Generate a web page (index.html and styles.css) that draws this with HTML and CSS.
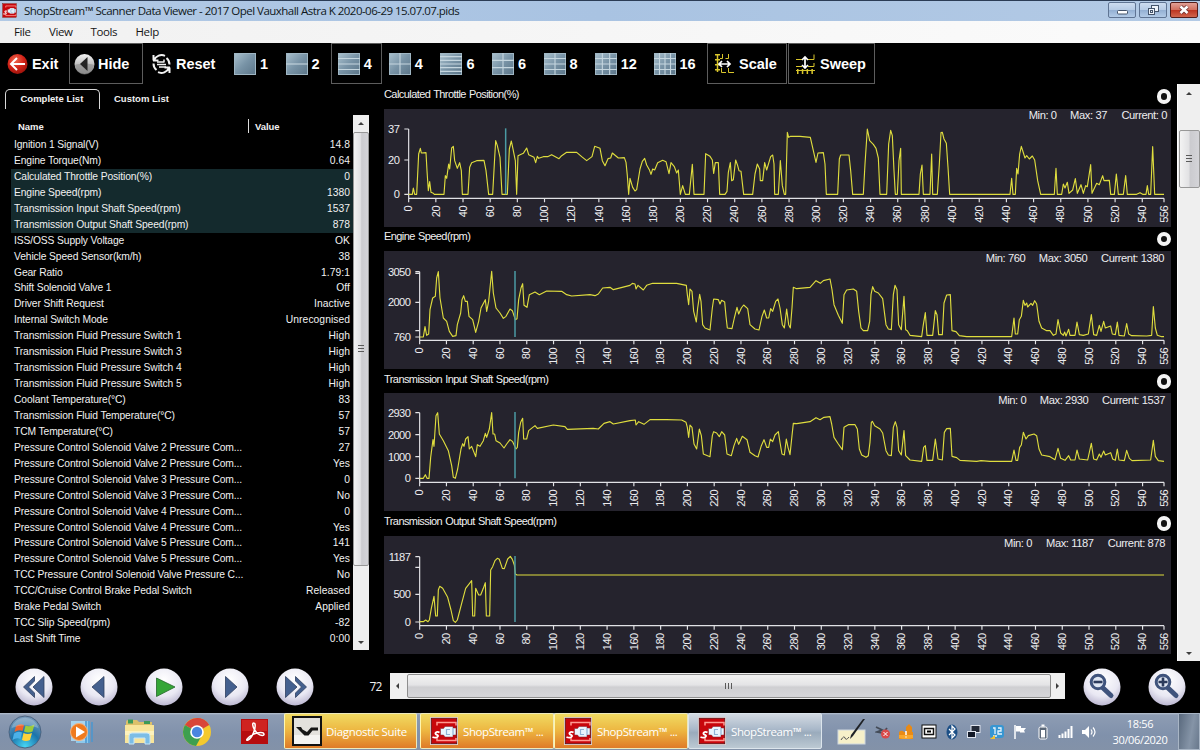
FILE: index.html
```html
<!DOCTYPE html>
<html lang="en">
<head>
<meta charset="utf-8">
<title>ShopStream Scanner Data Viewer</title>
<link rel="stylesheet" href="styles.css">
</head>
<body>
<svg class="defs" width="0" height="0">
  <defs>
    <linearGradient id="tile" x1="0" y1="0" x2="1" y2="1"><stop offset="0" stop-color="#a9c0cd"/><stop offset=".5" stop-color="#7893a6"/><stop offset="1" stop-color="#5c7689"/></linearGradient>
    <radialGradient id="orb" cx=".5" cy=".3" r=".75"><stop offset="0" stop-color="#ffffff"/><stop offset=".6" stop-color="#e9e8f3"/><stop offset="1" stop-color="#b3aecb"/></radialGradient>
    <radialGradient id="red" cx=".4" cy=".3" r=".8"><stop offset="0" stop-color="#ef6a50"/><stop offset=".5" stop-color="#d32318"/><stop offset="1" stop-color="#8f0f08"/></radialGradient>
    <linearGradient id="silver" x1="0" y1="0" x2="0" y2="1"><stop offset="0" stop-color="#f4f4f4"/><stop offset="1" stop-color="#8d8d8d"/></linearGradient>
    <radialGradient id="start" cx=".5" cy=".95" r=".95"><stop offset="0" stop-color="#46d6f4"/><stop offset=".5" stop-color="#1b74ab"/><stop offset="1" stop-color="#7e9cba"/></radialGradient>
    <symbol id="shop" viewBox="0 0 28 28">
      <rect width="28" height="28" fill="#ddd3d3"/><rect x="1.300" y="1.300" width="25.400" height="25.400" fill="#c8060c" stroke="#5e1014" stroke-width=".8"/>
      <path d="M7 8.500V5.500h19v3M7 21v2.500h19V21" fill="none" stroke="#ff9a92" stroke-width="1.500"/>
      <path d="M10.500 11.500h3l1.500-2h8V11h3v7h-3v2h-8l-1.500-2h-3z" fill="#e9f5fd" stroke="#7d2430" stroke-width=".5"/>
      <path d="M9.500 15.500c-2-1.200-4.500-.4-4 1.200s3 1 2.500 2.600-3.500 1.600-5.500.7" fill="none" stroke="#fff" stroke-width="1.900"/>
      <path d="M20 12.500h-3.500v5H20M23 11v7" fill="none" stroke="#8fb3d6" stroke-width="1.200"/>
    </symbol>
  </defs>
</svg>
<div class="screen">
  <header class="titlebar">
    <svg class="app-icon" width="15" height="15"><use href="#shop"/></svg>
    <span class="title">ShopStream™ Scanner Data Viewer - 2017 Opel Vauxhall Astra K 2020-06-29 15.07.07.pids</span>
    <span class="winbtn"><svg width="28" height="16"><rect x="9.500" y="8.500" width="10" height="3.500" rx="1" fill="#fff" stroke="#44546b"/></svg></span>
    <span class="winbtn"><svg width="28" height="16" fill="#eef3fa" stroke="#44546b"><rect x="12.500" y="3.500" width="7" height="6"/><rect x="9.500" y="6.500" width="6" height="6"/><rect x="11.500" y="8.500" width="2" height="2"/></svg></span>
    <span class="winbtn close"><svg width="28" height="16"><path d="M10.500 4.500l7 6.500M17.500 4.500l-7 6.500" stroke="#6e3030" stroke-width="4.200"/><path d="M10.500 4.500l7 6.500M17.500 4.500l-7 6.500" stroke="#fff" stroke-width="2.600"/></svg></span>
  </header>
  <nav class="menu"><span class="m-file">File</span><span class="m-view">View</span><span class="m-tools">Tools</span><span>Help</span></nav>

  <div class="toolbar">
    <div class="tool exit"><svg width="21" height="22"><circle cx="10.500" cy="11" r="10" fill="url(#red)"/><path d="M18 11H4M10 5l-6 6 6 6" fill="none" stroke="#fff" stroke-width="2"/></svg>Exit</div>
    <div class="tool hide boxed"><svg width="21" height="22"><circle cx="10.500" cy="11" r="10" fill="url(#silver)"/><path d="M1 12a9.500 9.500 0 0 0 19 0c-5-2-14-2-19 0z" fill="#8b8b8b" opacity=".6"/><path d="M13.500 4v14L6 11z" fill="#232323"/></svg>Hide</div>
    <div class="tool reset"><svg width="21" height="22" fill="none" stroke="#f2f2f2" stroke-width="2"><path d="M2.500 7.500V2M2 7.500h5.500M3 7A8.500 8.500 0 0 1 14 2.800M18.500 14.500V20M19 14.500h-5.500M18 15A8.500 8.500 0 0 1 7 19.200M2.500 10.500q0 4 3 6.500M18.500 11.500q0-4-3-6.500"/><path d="M6 9h7M6 11.500h9M8 14h7M13 6.500v3" stroke-width="1.500"/></svg>Reset</div>
    <div class="tool lay" data-c="1" data-r="1">1</div>
    <div class="tool lay" data-c="1" data-r="2">2</div>
    <div class="tool lay boxed" data-c="1" data-r="4">4</div>
    <div class="tool lay" data-c="2" data-r="2">4</div>
    <div class="tool lay" data-c="1" data-r="6">6</div>
    <div class="tool lay" data-c="2" data-r="3">6</div>
    <div class="tool lay" data-c="2" data-r="4">8</div>
    <div class="tool lay wide" data-c="3" data-r="4">12</div>
    <div class="tool lay wide" data-c="4" data-r="4">16</div>
    <div class="tool scale boxed"><svg width="21" height="22" fill="none"><path d="M3.500 1v18" stroke="#d9c62c" stroke-width="5" stroke-dasharray="1.500 3.500"/><path d="M3.500 1v18" stroke="#d9c62c" stroke-width="1.500"/><path d="M8.500 1v4.500H6M14.500 1v4.500h-3M7.500 15v4.500H12M14.500 15v4.500H20" stroke="#d9c62c"/><path d="M5 11h11M8 8l-3 3 3 3M13 8l3 3-3 3" stroke="#fff" stroke-width="1.700"/></svg>Scale</div>
    <div class="tool sweep boxed"><svg width="21" height="22" fill="none"><path d="M2 18.500h18" stroke="#d9c62c" stroke-width="5" stroke-dasharray="1.500 3.300"/><path d="M1 17.500h19" stroke="#d9c62c"/><path d="M1 6.500h6M1 13.500h6M13 6.500h6V1.500M13 13.500h6V10" stroke="#d9c62c"/><path d="M10 4v11M7 7l3-3 3 3M7 12l3 3 3-3" stroke="#fff" stroke-width="1.700"/></svg>Sweep</div>
  </div>

  <main class="work">
    <aside class="side">
      <div class="tabs"><span class="tab active">Complete List</span><span class="tab">Custom List</span></div>
      <div class="listwrap">
        <div class="list">
          <div class="head"><span class="h-name">Name</span><span class="h-val">Value</span></div>
          <div class="row"><span>Ignition 1 Signal(V)</span><b>14.8</b></div>
          <div class="row"><span>Engine Torque(Nm)</span><b>0.64</b></div>
          <div class="row sel"><span>Calculated Throttle Position(%)</span><b>0</b></div>
          <div class="row sel"><span>Engine Speed(rpm)</span><b>1380</b></div>
          <div class="row sel"><span>Transmission Input Shaft Speed(rpm)</span><b>1537</b></div>
          <div class="row sel"><span>Transmission Output Shaft Speed(rpm)</span><b>878</b></div>
          <div class="row"><span>ISS/OSS Supply Voltage</span><b>OK</b></div>
          <div class="row"><span>Vehicle Speed Sensor(km/h)</span><b>38</b></div>
          <div class="row"><span>Gear Ratio</span><b>1.79:1</b></div>
          <div class="row"><span>Shift Solenoid Valve 1</span><b>Off</b></div>
          <div class="row"><span>Driver Shift Request</span><b>Inactive</b></div>
          <div class="row"><span>Internal Switch Mode</span><b>Unrecognised</b></div>
          <div class="row"><span>Transmission Fluid Pressure Switch 1</span><b>High</b></div>
          <div class="row"><span>Transmission Fluid Pressure Switch 3</span><b>High</b></div>
          <div class="row"><span>Transmission Fluid Pressure Switch 4</span><b>High</b></div>
          <div class="row"><span>Transmission Fluid Pressure Switch 5</span><b>High</b></div>
          <div class="row"><span>Coolant Temperature(°C)</span><b>83</b></div>
          <div class="row"><span>Transmission Fluid Temperature(°C)</span><b>57</b></div>
          <div class="row"><span>TCM Temperature(°C)</span><b>57</b></div>
          <div class="row"><span>Pressure Control Solenoid Valve 2 Pressure Com...</span><b>27</b></div>
          <div class="row"><span>Pressure Control Solenoid Valve 2 Pressure Com...</span><b>Yes</b></div>
          <div class="row"><span>Pressure Control Solenoid Valve 3 Pressure Com...</span><b>0</b></div>
          <div class="row"><span>Pressure Control Solenoid Valve 3 Pressure Com...</span><b>No</b></div>
          <div class="row"><span>Pressure Control Solenoid Valve 4 Pressure Com...</span><b>0</b></div>
          <div class="row"><span>Pressure Control Solenoid Valve 4 Pressure Com...</span><b>Yes</b></div>
          <div class="row"><span>Pressure Control Solenoid Valve 5 Pressure Com...</span><b>141</b></div>
          <div class="row"><span>Pressure Control Solenoid Valve 5 Pressure Com...</span><b>Yes</b></div>
          <div class="row"><span>TCC Pressure Control Solenoid Valve Pressure C...</span><b>No</b></div>
          <div class="row"><span>TCC/Cruise Control Brake Pedal Switch</span><b>Released</b></div>
          <div class="row"><span>Brake Pedal Switch</span><b>Applied</b></div>
          <div class="row"><span>TCC Slip Speed(rpm)</span><b>-82</b></div>
          <div class="row"><span>Last Shift Time</span><b>0:00</b></div>
        </div>
        <div class="vscroll listscroll"><i class="up"></i><div class="thumb"><i class="grip"></i></div><i class="down"></i></div>
      </div>
    </aside>
    <section class="graphs" id="graphs"></section>
    <div class="vscroll mainscroll"><i class="up"></i><div class="thumb"><i class="grip"></i></div><i class="down"></i></div>
  </main>

  <footer class="controls">
    <div class="players">
      <svg width="40" height="40"><circle cx="20" cy="20" r="18.500" fill="url(#orb)"/><path d="M20.500 9.500l-11 10.500 11 10.500v-4.500L14.500 20l6-6zM30 9.500v21L19 20z" fill="#44608f" stroke="#2e3f60" stroke-width=".8"/></svg>
      <svg width="40" height="40"><circle cx="20" cy="20" r="18.500" fill="url(#orb)"/><path d="M25 9.500v21L13 20z" fill="#44608f" stroke="#2e3f60" stroke-width=".8"/></svg>
      <svg width="40" height="40"><circle cx="20" cy="20" r="18.500" fill="url(#orb)"/><path d="M12.500 11v18.500L31 20z" fill="#35a637" stroke="#23662a" stroke-width=".8"/></svg>
      <svg width="40" height="40"><circle cx="20" cy="20" r="18.500" fill="url(#orb)"/><path d="M15.500 9.500v21L27 20z" fill="#44608f" stroke="#2e3f60" stroke-width=".8"/></svg>
      <svg width="40" height="40"><circle cx="20" cy="20" r="18.500" fill="url(#orb)"/><path d="M10.500 9.500v21L22 20zM20.500 9.500L31.500 20l-11 10.500v-4.500l6-6-6-6z" fill="#44608f" stroke="#2e3f60" stroke-width=".8"/></svg>
    </div>
    <span class="frame">72</span>
    <div class="hscroll"><i class="left"></i><div class="hthumb"><i class="grip v"></i></div><i class="right"></i></div>
    <div class="zooms">
      <svg width="40" height="40"><circle cx="20" cy="20" r="18.500" fill="url(#orb)"/><path d="M20.500 20.500l8.500 8" stroke="#3f537c" stroke-width="5" stroke-linecap="round"/><circle cx="16" cy="15" r="6.800" fill="#dfe6f2" stroke="#3f537c" stroke-width="3"/><path d="M11.500 15h9" stroke="#2c3b5c" stroke-width="2.600"/></svg>
      <svg width="40" height="40"><circle cx="20" cy="20" r="18.500" fill="url(#orb)"/><path d="M20.500 20.500l8.500 8" stroke="#3f537c" stroke-width="5" stroke-linecap="round"/><circle cx="16" cy="15" r="6.800" fill="#dfe6f2" stroke="#3f537c" stroke-width="3"/><path d="M11.500 15h9M16 10.500v9" stroke="#2c3b5c" stroke-width="2.600"/></svg>
    </div>
  </footer>

  <div class="taskbar">
    <div class="pins">
      <svg class="p1" width="34" height="34"><circle cx="17" cy="17" r="16" fill="url(#start)" stroke="#4d6480"/><path d="M8 11q4-3 8-1l-1.500 6q-4-2-8 1z" fill="#f0642d"/><path d="M17.500 10.500q4 2 9-1l-2 7q-4 2-8.500 0z" fill="#9bcb3c"/><path d="M6 18.500q4-3 8-1L12.500 24q-4-2-8 1z" fill="#4bb1e8"/><path d="M15.500 18q4 2 8.500 0l-2 7q-4 2-8 0z" fill="#fdd23a"/><path d="M3.500 13A14 14 0 0 1 30.500 13 30 24 0 0 0 3.500 13z" fill="#fff" opacity=".25"/></svg>
      <svg class="p2" width="24" height="24"><path d="M6 1h14v22H6z" fill="#8cc9ec"/><path d="M16 1v22M19 1v22M22 2v20" stroke="#4a97cf" stroke-width="1.500"/><path d="M1 1h14v20H1z" fill="#a8d4ee"/><circle cx="9" cy="12" r="8.500" fill="#ef7a1e" stroke="#f7b27b"/><path d="M6 6.500v11l9-5.500z" fill="#fff"/></svg>
      <svg class="p3" width="31" height="28"><path d="M2 4q0-2 2-2h9l2 2h13v20H2z" fill="#dcc06a"/><path d="M4 1.500h5v4H4zM20 3h6v3h-6z" fill="#3c9b58"/><path d="M1 7h29v18H1z" fill="#f8e59b"/><path d="M1 13h29v4H1z" fill="#fdf2bd"/><path d="M5 26v-8q0-3 3-3h15q3 0 3 3v8h-5v-6H10v6z" fill="#7cbde6" stroke="#c7e6f7"/></svg>
      <svg class="p4" width="30" height="30"><circle cx="15" cy="15" r="14" fill="#f4c92e"/><path d="M15 15L2.900 8A14 14 0 0 1 27.100 8z" fill="#d9453a"/><path d="M15 1a14 14 0 0 1 12.100 7H15z" fill="#d9453a"/><path d="M2.900 8A14 14 0 0 0 14 29l6-11-5-3z" fill="#3d9f50"/><circle cx="15" cy="15" r="6.800" fill="#fff"/><circle cx="15" cy="15" r="5.200" fill="#4a85e0"/></svg>
      <svg class="p5" width="28" height="26"><rect width="27" height="25" fill="#b60c0f"/><rect x="1" y="1" width="25" height="11" fill="#cf2321"/><path d="M12.500 4c-2 0 0 7 4 10.500 3 2.500 7 2.500 6.500.500-.5-2.500-9-1.500-13 1.500-5 3.500-5 5.500-3 4.500 4-2 8-11 7-16-.2-.8-1-1-1.500-1z" fill="none" stroke="#fff" stroke-width="1.500"/></svg>
    </div>
    <div class="task hot diag"><svg width="30" height="30"><rect x="1" y="1" width="28" height="28" fill="#e3e1dd" stroke="#111" stroke-width="2"/><path d="M2 19h26v9H2z" fill="#fff" opacity=".6"/><path d="M4 11h5l1.500 2.500L15 16l4-4.500h7v3h-5.500l-4 5h-4L7 14z" fill="#161616"/></svg><span>Diagnostic Suite</span></div>
    <div class="task hot"><svg width="28" height="28"><use href="#shop"/></svg><span>ShopStream™ ...</span></div>
    <div class="task hot"><svg width="28" height="28"><use href="#shop"/></svg><span>ShopStream™ ...</span></div>
    <div class="task cool"><svg width="28" height="28"><use href="#shop"/></svg><span>ShopStream™ ...</span></div>
    <div class="tray">
      <svg class="pen" width="30" height="30"><rect x="1" y="13" width="27" height="14" fill="#f6f0c9" stroke="#cfd8df"/><path d="M4 23q3-5 4-2t4-1" fill="none" stroke="#555"/><path d="M28 2L16 19l-3 3 1-4L26 2z" fill="#1e2125"/></svg>
      <svg width="16" height="16"><path d="M1 3l6 3-5 2 6 1 4-5" stroke="#444c58" fill="none" stroke-width="1.800"/><circle cx="10.500" cy="10" r="4.500" fill="#d84a4a"/><path d="M8.500 8l4 4M12.500 8l-4 4" stroke="#fff"/></svg>
      <svg width="16" height="16"><path d="M1 8q2-2 4-1l1 1h2V3l3-3 3 3v5h1v7H1z" fill="#e88a16"/><path d="M1 11h14v3q-7 2-14 0z" fill="#f8a72c"/><path d="M8 7v4M8 12.500v1" stroke="#fff" stroke-width="1.500"/></svg>
      <svg width="16" height="16"><rect x="1" y="1" width="14" height="13" fill="#fff" stroke="#111"/><rect x="3.500" y="4.500" width="9" height="6" fill="none" stroke="#111" stroke-width="1.500"/><rect x="6" y="6.500" width="4" height="2"/></svg>
      <svg width="16" height="16"><ellipse cx="8" cy="8" rx="5.500" ry="7.500" fill="#1c4f86"/><path d="M5 5l6 6-3 3V2l3 3-6 6" fill="none" stroke="#fff" stroke-width="1.200"/></svg>
      <svg width="16" height="16"><rect x="5" y="1.500" width="9" height="7" fill="#232a38" stroke="#dfe4ee"/><rect x="1.500" y="7.500" width="8" height="6" fill="#111827" stroke="#dfe4ee"/></svg>
      <svg width="16" height="16"><rect x="1" y="1" width="14" height="13" rx="3" fill="#3796d2"/><path d="M4 4h2v6M9 4h3v3H9v3h4M4 12h4" stroke="#e6f4fc" fill="none" stroke-width="1.300"/><path d="M1 15l5-4v4z" fill="#f2c12e"/></svg>
      <svg width="16" height="16"><path d="M3 1v14" stroke="#fff" stroke-width="1.500"/><path d="M4 2h5v2h5l-2 2.500 1 2H8v-1H4z" fill="#fff"/></svg>
      <svg width="16" height="16"><rect x="4" y="3" width="8" height="12" rx="1.500" fill="#5b6879" stroke="#fff"/><path d="M6.500 1.500h3" stroke="#fff" stroke-width="2"/><rect x="6" y="6" width="4" height="7.500" fill="#fff"/></svg>
      <svg width="16" height="16"><path d="M1.500 14v-3M4.500 14V9.500M7.500 14V7.500M10.500 14V5M13.500 14V2" stroke="#fff" stroke-width="2"/></svg>
      <svg width="16" height="16"><path d="M1 6h3l4-4v12l-4-4H1z" fill="#fff"/><path d="M10 5.500q2 2.500 0 5M12 3.500q4 4.500 0 9" fill="none" stroke="#fff" stroke-width="1.200"/></svg>
    </div>
    <div class="clock"><span>18:56</span><span>30/06/2020</span></div>
    <div class="peek"></div>
  </div>
</div>
<script src="charts.js"></script>
</body>
</html>
```
FILE: styles.css
```css
* { box-sizing: border-box; }
body { margin: 0; background: #000; font-family: "Liberation Sans", Arial, sans-serif; }
.defs { display: block; height: 0; width: 0; overflow: hidden; }
.screen { width: 1200px; height: 750px; display: flex; flex-direction: column; overflow: hidden; background: #000; color: #f1f1f1; }
.screen svg { display: block; flex: none; }

.titlebar { height: 21px; flex: none; display: flex; align-items: flex-start; gap: 3px; padding: 2px 2px 0 2px; border-top: 1px solid #2b3c55; background: linear-gradient(90deg, #b1c9e5, #a9c3e2 50%, #b3cae5); color: #101820; font-family: "Open Sans", "Noto Sans", sans-serif; }
.app-icon { margin-right: 4px; }
.title { flex: 1; font-size: 11.500px; line-height: 15px; letter-spacing: -.52px; white-space: nowrap; }
.winbtn { width: 28px; height: 16px; border: 1px solid #5f7493; border-radius: 2px; background: linear-gradient(#cddcf0, #b6cbe5 48%, #94b0d3 52%, #b2cae6); margin-top: -1px; }
.winbtn svg { margin: -1px; }
.winbtn.close { border-color: #551d1a; background: linear-gradient(#e2a096, #d2705f 48%, #bd3521 52%, #d0654d); }
.menu { height: 22px; flex: none; display: flex; padding-left: 14px; background: linear-gradient(90deg, #f1f1f1, #fbfbfb); color: #151515; font: 11.500px/22px "Open Sans", "Noto Sans", sans-serif; letter-spacing: -.4px; }
.m-file { width: 35px; } .m-view { width: 41.500px; } .m-tools { width: 45px; }

.toolbar { height: 41px; flex: none; display: flex; font-weight: 700; font-size: 14.500px; letter-spacing: -.05px; color: #fff; }
.tool { display: flex; align-items: center; height: 41px; gap: 4px; flex: none; border: 1px solid transparent; }
.boxed { border-color: #5d5d5d; }
.exit { width: 69px; padding-left: 6px; }
.hide { width: 74px; padding-left: 4px; gap: 3px; }
.reset { width: 85px; padding-left: 7px; }
.lay { width: 51.600px; padding-left: 5px; }
.lay.boxed { width: 50.600px; margin-right: 1px; padding-left: 5.500px; }
.lay.wide { width: 58.900px; gap: 3.500px; }
.scale { width: 80px; padding-left: 6.500px; margin: 0 1px 0 -.4px; }
.sweep { width: 87.500px; padding-left: 6.500px; }

.work { height: 577px; flex: none; display: flex; }
.side { width: 384px; flex: none; }
.tabs { display: flex; height: 31px; padding: 5px 0 0 5px; font-size: 9.500px; font-weight: 700; line-height: 19px; }
.tab { padding-left: 14px; height: 20px; white-space: nowrap; }
.tab.active { width: 95px; padding-left: 14.500px; border: 1px solid #d8d8d8; border-bottom: 0; border-radius: 5px 5px 0 0; line-height: 18px; }
.listwrap { display: flex; height: 535px; padding-left: 11px; }
.list { width: 342px; font-size: 10.300px; letter-spacing: -.12px; }
.head { height: 22px; padding: 4px 0 0 7px; display: flex; font-size: 9.500px; font-weight: 700; line-height: 16px; letter-spacing: -.05px; }
.h-name { width: 231px; height: 14px; border-right: 1px solid #ddd; margin-right: 6px; }
.row { height: 15.940px; line-height: 16px; display: flex; justify-content: space-between; padding: 0 3px; white-space: nowrap; }
.row b { font-weight: 400; letter-spacing: .05px; }
.row.sel { background: #142a2d; }

.vscroll { background: #efefef; display: flex; flex-direction: column; align-items: center; flex: none; color: #3e3e3e; }
.up, .down, .left, .right { display: block; border: 3px solid transparent; width: 0; height: 0; flex: none; }
.up { border-bottom-color: #3e3e3e; border-top: 0; }
.down { border-top-color: #3e3e3e; border-bottom: 0; }
.left { border-right-color: #3e3e3e; border-left: 0; }
.right { border-left-color: #3e3e3e; border-right: 0; }
.thumb { width: 100%; border: 1px solid #979797; border-radius: 2px; background: linear-gradient(90deg, #f3f3f3, #e2e2e4 45%, #cbcbcf 55%, #d4d4d8); display: flex; align-items: center; justify-content: center; }
.grip { display: block; width: 6px; height: 8px; background: repeating-linear-gradient(#5a5a5a 0 1px, transparent 1px 3px); }
.grip.v { width: 8px; height: 6px; background: repeating-linear-gradient(90deg, #5a5a5a 0 1px, transparent 1px 3px); }
.listscroll { width: 16px; height: 535px; }
.listscroll .up { margin: 7px 0; }
.listscroll .thumb { height: 434px; }
.listscroll .down { margin-top: 75px; }
.mainscroll { width: 23px; margin-left: auto; border-left: 1px solid #fff; }
.mainscroll .up { margin: 8px 0 35px; }
.mainscroll .thumb { height: 58px; width: 21px; }
.mainscroll .down { margin-top: 464px; }

.graphs { width: 788px; flex: none; }
.graph { height: 142.400px; }
.ghead { height: 24.700px; display: flex; justify-content: space-between; font-size: 11px; line-height: 20px; letter-spacing: -.57px; word-spacing: .6px; padding-right: 1px; }
.dot { width: 14.500px; height: 14.500px; border-radius: 50%; border: 4.500px solid #f4f4f4; background: #111; margin-top: 5.300px; }
.plot { width: 787px; height: 118px; background: #25232d; }
.plot text { fill: #ededf0; font-family: "Liberation Sans", Arial, sans-serif; font-size: 33.500px; letter-spacing: -1.800px; }
.plot .info { letter-spacing: -1.200px; }
.axis { fill: none; stroke: #e2e2e6; stroke-width: 3.500; }
.trace { fill: none; stroke: #dfdd3e; stroke-width: 3.400; stroke-linejoin: round; }
.cursor { stroke: #4b9ba4; stroke-width: 4.500; }

.controls { height: 52px; flex: none; display: flex; align-items: flex-start; }
.players { display: flex; gap: 25.400px; padding: 6px 0 0 13.500px; width: 366px; flex: none; }
.frame { width: 24px; font: 12px/14px "Open Sans", sans-serif; margin-top: 19px; padding-left: 3.500px; letter-spacing: -.8px; flex: none; }
.hscroll { width: 675px; height: 26px; margin-top: 12px; background: #f0f0f0; display: flex; align-items: center; justify-content: space-between; padding: 0 6px 0 6px; flex: none; }
.hthumb { width: 650px; height: 24px; margin: 0 5px 0 8px; border: 1px solid #8f8f8f; border-radius: 2px; background: linear-gradient(#f2f2f2, #e4e4e6 45%, #cfcfd2 55%, #d6d6d9); display: flex; align-items: center; justify-content: center; }
.zooms { display: flex; gap: 25.500px; padding: 6px 0 0 16.500px; }

.taskbar { height: 37px; flex: none; display: flex; background: linear-gradient(#b7c2d1 0, #8d9cb3 2px, #8091ab 60%, #8392a8); font-family: "Open Sans", "Noto Sans", sans-serif; }
.pins { width: 284px; display: flex; align-items: center; padding-left: 8px; flex: none; }
.p2 { margin-left: 28px; } .p3 { margin-left: 30px; } .p4 { margin-left: 27px; } .p5 { margin-left: 29px; }
.task { width: 134px; height: 36px; display: flex; align-items: center; gap: 5px; padding-left: 9px; border: 1px solid #ece9bd; border-left-color: #fff6ae; border-radius: 2px; color: #fff; font-size: 11.500px; letter-spacing: -.42px; white-space: nowrap; flex: none; }
.diag { width: 133px; margin-right: 3px; padding-left: 7px; gap: 4px; letter-spacing: -.3px; }
.hot { background: linear-gradient(#f0da62, #edb540 50%, #df7a28); }
.cool { background: linear-gradient(#d3dae2, #a9b8c9 45%, #9aabbc 55%, #bcc9d3); border-color: #dce5ec; }
.tray { display: flex; align-items: center; gap: 6.900px; padding-left: 15px; width: 286px; flex: none; }
.pen { margin-right: 1px; }
.clock { width: 64px; display: flex; flex-direction: column; align-items: center; font-size: 11px; line-height: 16px; padding-top: 3px; letter-spacing: -.35px; color: #fff; flex: none; }
.peek { flex: 1; margin-left: 6px; border: 1px solid #a8b5c5; background: linear-gradient(100deg, #59697d, #8594a7 60%, #68788c); }
```
FILE: charts.js
```js
// Trace coordinates are stored at three units per pixel.
// info: [text, right edge]; ticks: [y, label].
const charts = [
  { name: 'Calculated Throttle Position(%)', info: [['Min: 0', 2031], ['Max: 37', 2182], ['Current: 0', 2362]], top: 75, infoY: 105, x0: 86, axis: 343,
    ticks: [[135, '37'], [228, '20'], [331, '0']], cursor: 377, low: 331,
    pts: '86,331 97,331 100,312 104,331 110,331 116,210 121,193 124,207 138,206 141,260 145,320 149,293 153,325 160,328 163,331 192,331 196,275 200,283 206,240 209,255 215,192 220,187 224,230 232,253 239,236 244,260 247,331 264,331 269,250 275,236 290,230 312,229 318,260 326,331 338,331 343,240 347,170 352,185 360,220 366,331 382,331 388,195 394,171 398,190 406,230 410,331 414,215 430,208 440,192 446,212 462,220 467,236 472,217 476,223 490,218 503,218 515,212 537,224 545,215 560,205 590,205 605,218 620,230 636,218 644,187 660,193 667,230 675,245 684,224 692,222 697,207 715,222 733,221 738,235 742,275 746,331 750,283 758,310 765,321 770,317 780,255 787,232 794,223 800,243 808,257 813,271 818,255 824,258 833,236 848,229 858,233 867,269 873,236 883,248 890,267 895,258 901,331 908,305 916,331 928,331 937,241 942,331 972,331 977,209 990,217 997,228 1001,268 1006,236 1015,236 1019,331 1035,331 1041,322 1045,265 1051,236 1055,290 1060,287 1067,228 1073,245 1077,260 1083,262 1091,331 1118,331 1125,270 1132,240 1139,255 1141,290 1148,290 1154,236 1160,258 1172,218 1178,213 1182,240 1184,331 1195,331 1201,230 1207,305 1213,331 1217,331 1222,145 1226,160 1232,157 1260,157 1291,160 1300,200 1308,235 1314,207 1330,206 1335,240 1339,331 1373,331 1378,225 1382,213 1407,213 1412,260 1418,331 1450,331 1455,240 1462,135 1469,170 1480,181 1488,193 1495,222 1500,331 1520,331 1526,180 1532,139 1537,155 1542,260 1546,331 1552,331 1557,230 1562,193 1564,331 1617,331 1621,270 1626,243 1630,331 1650,331 1655,210 1658,331 1672,331 1678,240 1683,146 1687,145 1692,165 1699,178 1704,250 1709,331 1890,331 1895,283 1899,331 1906,331 1910,253 1914,270 1919,210 1924,187 1935,222 1940,215 1948,225 1957,216 1964,228 1973,290 1982,331 2023,331 2028,253 2032,331 2045,331 2050,300 2055,312 2062,295 2067,328 2078,318 2086,284 2092,328 2103,302 2110,328 2117,305 2122,308 2132,242 2136,328 2150,298 2158,302 2168,275 2172,290 2188,289 2192,331 2203,331 2209,270 2215,331 2230,331 2237,275 2242,331 2270,331 2280,326 2288,331 2298,331 2302,305 2306,331 2312,331 2318,188 2324,331 2352,331' },
  { name: 'Engine Speed(rpm)', info: [['Min: 760', 1937], ['Max: 3050', 2123], ['Current: 1380', 2353]], top: 69, infoY: 102, x0: 119, axis: 337,
    ticks: [[131, '3050'], [136, ''], [223, '2000'], [308, ''], [327, '760']], cursor: 405, low: 327,
    pts: '119,327 130,327 135,296 140,322 146,318 150,245 158,210 166,205 170,150 175,131 180,210 190,270 200,280 208,310 218,325 228,323 232,290 242,255 246,215 251,203 256,220 262,220 267,265 278,275 287,313 296,280 303,240 316,215 320,250 326,220 330,180 335,130 340,195 348,240 360,255 370,271 378,265 390,243 397,248 406,275 411,272 416,215 423,180 428,167 432,232 441,238 448,200 465,192 478,200 500,189 545,190 560,200 575,204 630,200 645,203 655,198 668,180 690,178 700,185 750,172 757,166 765,168 768,183 774,172 790,186 800,172 818,166 890,166 919,172 922,200 926,230 930,183 936,190 941,250 949,282 953,240 959,199 963,220 968,290 975,300 990,306 997,240 1001,213 1015,215 1020,228 1025,217 1034,222 1038,265 1042,300 1056,302 1063,270 1071,238 1076,258 1084,240 1091,231 1103,242 1110,290 1125,303 1137,306 1146,265 1153,246 1160,270 1166,270 1172,242 1178,250 1187,220 1194,213 1200,240 1207,290 1213,300 1220,243 1226,290 1231,300 1236,240 1240,178 1250,182 1290,178 1308,158 1321,166 1330,158 1350,153 1356,185 1362,230 1375,262 1387,286 1392,200 1400,186 1420,183 1430,190 1436,250 1443,300 1450,308 1463,308 1469,280 1473,200 1478,176 1484,190 1495,195 1508,212 1518,290 1525,303 1534,305 1540,200 1545,172 1551,185 1556,290 1564,305 1572,205 1577,305 1582,308 1590,322 1625,326 1630,290 1636,254 1641,322 1658,322 1666,248 1671,260 1676,320 1687,320 1692,225 1700,201 1711,200 1716,308 1728,311 1738,323 1760,326 1895,326 1902,270 1906,318 1913,318 1918,275 1924,265 1930,217 1935,232 1940,225 1943,237 1953,226 1958,232 1964,218 1970,228 1977,280 1985,300 2000,308 2010,308 2020,322 2028,318 2034,275 2042,315 2050,322 2054,312 2058,324 2066,304 2070,322 2085,322 2091,282 2098,320 2110,322 2125,318 2134,260 2141,320 2150,322 2158,292 2163,310 2171,280 2176,300 2192,294 2197,318 2206,320 2212,282 2217,322 2233,324 2240,287 2246,318 2255,323 2300,324 2315,322 2320,236 2326,300 2332,322 2345,326 2352,326' },
  { name: 'Transmission Input Shaft Speed(rpm)', info: [['Min: 0', 1940], ['Max: 2930', 2126], ['Current: 1537', 2356]], top: 72, infoY: 104, x0: 119, axis: 340,
    ticks: [[131, '2930'], [197, '2000'], [263, '1000'], [328, '0']], cursor: 405, low: 328,
    pts: '119,328 130,328 136,317 141,328 147,328 152,265 159,212 162,232 168,140 173,131 178,195 190,215 205,245 215,290 220,325 226,328 233,300 243,240 248,224 252,232 257,210 264,203 268,240 275,232 287,263 292,227 300,232 310,215 316,193 320,205 328,180 335,131 339,195 344,195 348,215 360,222 372,237 380,225 390,212 398,218 408,240 412,235 416,190 422,160 428,148 431,210 440,210 446,185 465,170 472,178 520,168 555,173 562,181 640,178 655,180 672,163 690,158 700,165 750,155 766,153 768,168 776,158 792,166 810,152 860,152 905,153 918,160 922,175 926,205 930,168 936,175 942,225 950,240 958,180 964,200 970,255 990,263 997,200 1001,188 1010,192 1018,203 1025,188 1034,198 1041,255 1054,260 1062,230 1070,208 1076,226 1087,202 1101,212 1110,250 1125,260 1134,264 1144,230 1152,212 1160,235 1166,235 1171,210 1178,218 1185,198 1195,188 1200,220 1206,255 1213,258 1219,210 1224,235 1230,257 1236,200 1240,163 1250,164 1290,158 1308,146 1320,152 1332,145 1350,143 1355,165 1362,205 1375,225 1387,242 1392,175 1405,167 1425,167 1432,180 1438,240 1445,258 1458,265 1465,260 1470,220 1474,160 1477,157 1484,170 1500,180 1508,192 1518,245 1525,258 1534,260 1540,175 1546,158 1551,175 1556,245 1564,258 1572,185 1577,260 1590,273 1625,277 1631,235 1636,230 1641,274 1658,274 1666,210 1674,270 1687,273 1693,190 1700,179 1711,178 1716,262 1730,266 1740,274 1790,277 1803,275 1830,277 1895,277 1902,243 1908,274 1913,274 1919,235 1924,228 1930,190 1938,210 1945,200 1962,195 1970,200 1977,240 1985,258 2010,263 2025,272 2034,238 2042,268 2055,274 2066,260 2072,273 2085,273 2091,243 2098,270 2123,273 2134,223 2141,270 2150,273 2158,255 2163,265 2171,246 2176,258 2192,251 2198,270 2206,274 2212,240 2217,273 2233,275 2240,244 2248,268 2256,275 2312,273 2320,214 2326,262 2335,275 2352,277' },
  { name: 'Transmission Output Shaft Speed(rpm)', info: [['Min: 0', 1957], ['Max: 1187', 2142], ['Current: 878', 2356]], top: 498, infoY: 531, x0: 119, axis: 767,
    ticks: [[560, '1187'], [592, ''], [673, '500'], [756, '0']], cursor: 405, low: 756,
    pts: '119,755 130,755 137,750 144,755 148,750 154,715 162,679 167,738 172,738 175,660 179,649 188,655 203,682 213,720 220,752 226,757 232,750 245,700 257,655 275,632 278,738 284,738 287,655 296,675 302,675 310,655 316,638 319,738 329,738 332,600 338,590 345,572 352,565 358,568 367,595 373,596 383,567 391,559 397,568 403,585 406,612 411,615 2352,615' }
];

function plot(c) {
  const right = 2352, step = (right - c.x0) / 556;
  let axis = `M${c.x0} ${c.ticks[0][0]}V${c.axis}H${right}`, text = '';
  for (const [y, label] of c.ticks) {
    axis += `M${c.x0 - 13} ${y}H${c.x0}`;
    text += `<text x="${c.x0 - 28}" y="${y + 12}" text-anchor="end">${label}</text>`;
  }
  for (let v = 0; v <= 556; v += v === 540 ? 16 : 20) {
    const x = c.x0 + v * step;
    axis += `M${x} ${c.axis}v12`;
    text += `<text transform="translate(${x + 11} ${c.axis + 23}) rotate(-90)" text-anchor="end">${v}</text>`;
  }
  for (const [label, x] of c.info) {
    text += `<text class="info" x="${x - 1}" y="${c.infoY}" text-anchor="end">${label}</text>`;
  }
  return `<svg class="plot" viewBox="12 ${c.top} 2361 354"><path class="axis" d="${axis}"/>${text}` +
    `<polyline class="trace" points="${c.pts}"/><path class="cursor" d="M${c.cursor} ${c.ticks[0][0] - 2}V${c.low}"/></svg>`;
}

document.getElementById('graphs').innerHTML = charts.map(c =>
  `<div class="graph"><div class="ghead"><span>${c.name}</span><i class="dot"></i></div>${plot(c)}</div>`).join('');

// Layout buttons: a shaded tile divided into rows and columns.
document.querySelectorAll('.lay').forEach(el => {
  const cols = +el.dataset.c, rows = +el.dataset.r;
  let d = '';
  for (let i = 1; i < cols; i++) d += `M${22 * i / cols} 0V22`;
  for (let i = 1; i < rows; i++) d += `M0 ${22 * i / rows}H22`;
  el.insertAdjacentHTML('afterbegin',
    `<svg width="22" height="22"><rect x=".5" y=".5" width="21" height="21" fill="url(#tile)" stroke="#9fb6c3"/><path d="${d}" stroke="#c5d6df" stroke-width="1.100"/></svg>`);
});
```
